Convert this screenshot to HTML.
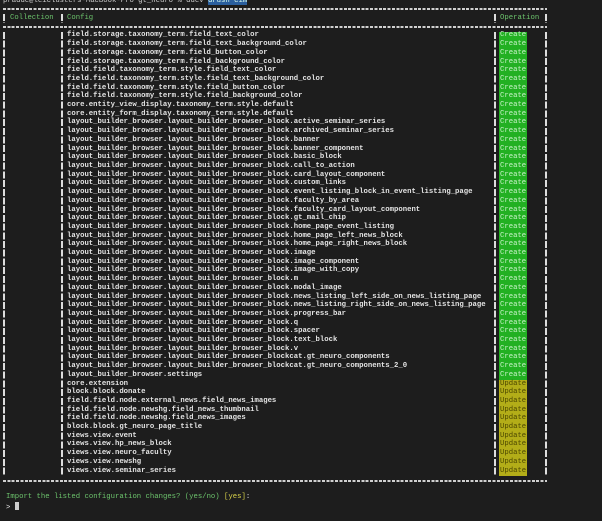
<!DOCTYPE html><html><head><style>
body{margin:0;width:602px;height:521px;background:#1d1d1d;overflow:hidden;position:relative;font-family:"Liberation Mono",monospace;font-size:7.28px;color:#e4e4e4}
pre{margin:0;position:absolute;font:inherit;line-height:8.71px;white-space:pre}
.b{font-weight:bold}
.v{position:absolute;width:1.5px;background:repeating-linear-gradient(#ddd 0 7px,transparent 7px 8.71px)}
.h{position:absolute;height:2px;left:3px;width:544px;background:repeating-linear-gradient(90deg,#d0d0d0 0 3px,transparent 3px 4.37px)}
.g{color:#6cc36c}
</style></head><body>
<pre style="left:3px;top:-3.35px;color:#ccc">pradde@leiclusters-MacBook-Pro gt_neuro % ddev <span style="background:#2b5f9e;color:#dfe">drush cim</span></pre>
<div class="h" style="top:8px"></div>
<div class="h" style="top:26px"></div>
<div class="h" style="top:479.5px"></div>
<div class="v" style="left:3px;top:14px;height:9px"></div>
<div class="v" style="left:61px;top:14px;height:9px"></div>
<div class="v" style="left:494px;top:14px;height:9px"></div>
<div class="v" style="left:545px;top:14px;height:9px"></div>
<div class="v" style="left:3px;top:32px;height:444px"></div>
<div class="v" style="left:61px;top:32px;height:444px"></div>
<div class="v" style="left:494px;top:32px;height:444px"></div>
<div class="v" style="left:545px;top:32px;height:444px"></div>
<pre class="g" style="left:10px;top:13.6px">Collection</pre>
<pre class="g" style="left:67px;top:13.6px">Config</pre>
<pre class="g" style="left:500px;top:13.6px">Operation</pre>
<div style="position:absolute;left:499px;width:28px;top:31.5px;height:348.4px;background:#22b022"></div>
<div style="position:absolute;left:499px;width:28px;top:379.9px;height:95.8px;background:#b3ad18"></div>
<pre style="left:500px;top:31.45px;color:#c8f2c8">Create
Create
Create
Create
Create
Create
Create
Create
Create
Create
Create
Create
Create
Create
Create
Create
Create
Create
Create
Create
Create
Create
Create
Create
Create
Create
Create
Create
Create
Create
Create
Create
Create
Create
Create
Create
Create
Create
Create
Create<span style="color:#4d4800">
Update
Update
Update
Update
Update
Update
Update
Update
Update
Update
Update</span></pre>
<pre class="b" style="left:67px;top:31.45px">field.storage.taxonomy_term.field_text_color
field.storage.taxonomy_term.field_text_background_color
field.storage.taxonomy_term.field_button_color
field.storage.taxonomy_term.field_background_color
field.field.taxonomy_term.style.field_text_color
field.field.taxonomy_term.style.field_text_background_color
field.field.taxonomy_term.style.field_button_color
field.field.taxonomy_term.style.field_background_color
core.entity_view_display.taxonomy_term.style.default
core.entity_form_display.taxonomy_term.style.default
layout_builder_browser.layout_builder_browser_block.active_seminar_series
layout_builder_browser.layout_builder_browser_block.archived_seminar_series
layout_builder_browser.layout_builder_browser_block.banner
layout_builder_browser.layout_builder_browser_block.banner_component
layout_builder_browser.layout_builder_browser_block.basic_block
layout_builder_browser.layout_builder_browser_block.call_to_action
layout_builder_browser.layout_builder_browser_block.card_layout_component
layout_builder_browser.layout_builder_browser_block.custom_links
layout_builder_browser.layout_builder_browser_block.event_listing_block_in_event_listing_page
layout_builder_browser.layout_builder_browser_block.faculty_by_area
layout_builder_browser.layout_builder_browser_block.faculty_card_layout_component
layout_builder_browser.layout_builder_browser_block.gt_mail_chip
layout_builder_browser.layout_builder_browser_block.home_page_event_listing
layout_builder_browser.layout_builder_browser_block.home_page_left_news_block
layout_builder_browser.layout_builder_browser_block.home_page_right_news_block
layout_builder_browser.layout_builder_browser_block.image
layout_builder_browser.layout_builder_browser_block.image_component
layout_builder_browser.layout_builder_browser_block.image_with_copy
layout_builder_browser.layout_builder_browser_block.m
layout_builder_browser.layout_builder_browser_block.modal_image
layout_builder_browser.layout_builder_browser_block.news_listing_left_side_on_news_listing_page
layout_builder_browser.layout_builder_browser_block.news_listing_right_side_on_news_listing_page
layout_builder_browser.layout_builder_browser_block.progress_bar
layout_builder_browser.layout_builder_browser_block.q
layout_builder_browser.layout_builder_browser_block.spacer
layout_builder_browser.layout_builder_browser_block.text_block
layout_builder_browser.layout_builder_browser_block.v
layout_builder_browser.layout_builder_browser_blockcat.gt_neuro_components
layout_builder_browser.layout_builder_browser_blockcat.gt_neuro_components_2_0
layout_builder_browser.settings
core.extension
block.block.donate
field.field.node.external_news.field_news_images
field.field.node.newshg.field_news_thumbnail
field.field.node.newshg.field_news_images
block.block.gt_neuro_page_title
views.view.event
views.view.hp_news_block
views.view.neuro_faculty
views.view.newshg
views.view.seminar_series</pre>
<pre style="left:6px;top:493.3px"><span class="g">Import the listed configuration changes? (yes/no)</span> <span style="color:#d8d24a">[yes]</span>:
&gt; <span style="display:inline-block;width:4px;height:8px;background:#ccc;vertical-align:-1px"></span></pre>
</body></html>
